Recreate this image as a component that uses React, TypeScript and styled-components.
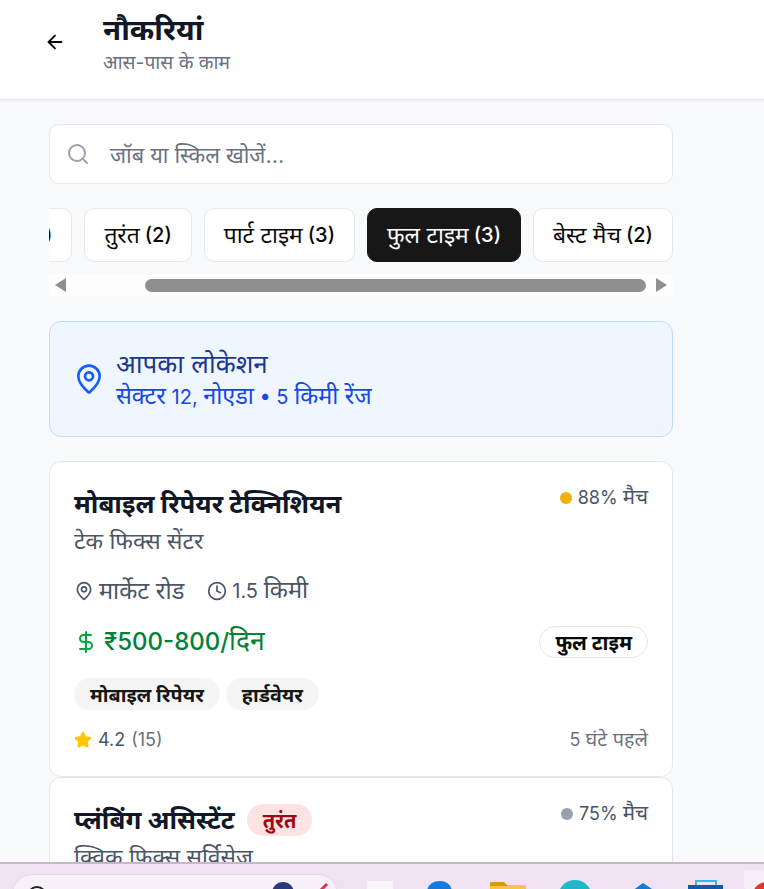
import styled, { createGlobalStyle } from "styled-components";
import { ArrowLeft, Clock, DollarSign, MapPin, Search, Star } from "lucide-react";

const GlobalStyle = createGlobalStyle`
  html, body {
    margin: 0;
    padding: 0;
    height: 100%;
    overflow: hidden;
  }
  body {
    font-family: Inter, "Noto Sans", "Noto Sans Devanagari", sans-serif;
    background: #f9fafb;
  }
  * {
    box-sizing: border-box;
  }
`;

// devanagari runs sit a bit larger and lighter than the latin digits next to them
const Hi = styled.span<{ $scale?: number }>`
  font-size: ${(p) => p.$scale ?? 1.14}em;
  font-weight: 400;
  line-height: 1;
`;

const Page = styled.div`
  height: 889px;
  display: flex;
  flex-direction: column;
  overflow: hidden;
`;

const Screen = styled.div`
  flex: 1;
  min-height: 0;
  overflow: hidden;
`;

const Header = styled.header`
  height: 100px;
  background: #fff;
  border-bottom: 1px solid #e5e7eb;
  box-shadow: 0 1px 2px rgba(0, 0, 0, 0.05);
  display: flex;
  align-items: flex-start;
  padding: 11px 0 0 43px;
`;

const BackBtn = styled.button`
  width: 24px;
  height: 24px;
  margin-top: 19px;
  padding: 0;
  border: none;
  background: none;
  color: #0a0a0a;
  display: flex;
  align-items: center;
  justify-content: center;
`;

const HeaderText = styled.div`
  margin-left: 36px;
  display: flex;
  flex-direction: column;
`;

const PageTitle = styled.h1`
  margin: 0;
  font-size: 29.5px;
  line-height: 36px;
  font-weight: 700;
  color: #101828;
`;

const PageSub = styled.p`
  margin: 1px 0 0;
  font-size: 19.2px;
  line-height: 28px;
  color: #6a7282;
`;

const Content = styled.main`
  width: 624px;
  margin-left: 49px;
  padding-top: 24px;
`;

const SearchBox = styled.div`
  height: 60px;
  background: #fff;
  border: 1px solid #e5e7eb;
  border-radius: 10px;
  display: flex;
  align-items: center;
  gap: 20px;
  padding-left: 16px;
  color: #99a1af;
`;

const Placeholder = styled.span`
  font-size: 21.7px;
  color: #6a7282;
`;

const Chips = styled.div`
  margin-top: 24px;
  display: flex;
  justify-content: flex-end;
  gap: 12px;
  overflow: hidden;
`;

const Chip = styled.div<{ $active?: boolean }>`
  flex: none;
  height: 54px;
  padding: 0 19px;
  border-radius: 10px;
  border: 1px solid ${(p) => (p.$active ? "#171717" : "#e5e7eb")};
  background: ${(p) => (p.$active ? "#171717" : "#fff")};
  color: ${(p) => (p.$active ? "#fff" : "#0a0a0a")};
  font-size: 20px;
  font-weight: 500;
  display: flex;
  align-items: center;
  gap: 5px;
`;

const ScrollTrack = styled.div`
  height: 22px;
  margin-top: 12px;
  background: #fdfdfd;
  display: flex;
  align-items: center;
  padding: 0 6px;
`;

const ArrowTip = styled.div<{ $right?: boolean }>`
  width: 0;
  height: 0;
  border-top: 7px solid transparent;
  border-bottom: 7px solid transparent;
  ${(p) =>
    p.$right
      ? "border-left: 11px solid #8f8f8f; margin-left: 10px;"
      : "border-right: 11px solid #8f8f8f; margin-right: 79px;"}
`;

const ScrollThumb = styled.div`
  flex: 1;
  height: 13px;
  border-radius: 7px;
  background: #8f8f8f;
`;

const LocationCard = styled.section`
  height: 116px;
  margin-top: 25px;
  background: #eff6ff;
  border: 1px solid #bedbff;
  border-radius: 12px;
  display: flex;
  align-items: center;
  gap: 11px;
  padding-left: 23px;
  color: #155dfc;
`;

const LocationText = styled.div`
  display: flex;
  flex-direction: column;
`;

const LocationTitle = styled.div`
  font-size: 26px;
  line-height: 36px;
  color: #1c398e;
`;

const LocationSub = styled.div`
  font-size: 20px;
  line-height: 30px;
  color: #1447e6;
`;

const JobList = styled.div`
  margin-top: 24px;
  display: flex;
  flex-direction: column;
`;

const JobCard = styled.article`
  flex: none;
  height: 316px;
  background: #fff;
  border: 1px solid #e5e7eb;
  border-radius: 12px;
  padding: 24px;
  display: flex;
  flex-direction: column;
`;

const TopRow = styled.div`
  display: flex;
  justify-content: space-between;
  align-items: flex-start;
`;

const TitleLine = styled.div`
  display: flex;
  align-items: center;
  gap: 12px;
`;

const JobTitle = styled.h3`
  margin: 0;
  font-size: 25.8px;
  line-height: 36px;
  font-weight: 700;
  color: #101828;
`;

const Urgent = styled.span`
  height: 32px;
  padding: 0 16px;
  border-radius: 16px;
  background: #ffe2e2;
  color: #9f0712;
  font-size: 20px;
  font-weight: 700;
  display: flex;
  align-items: center;
`;

const Match = styled.div`
  display: flex;
  align-items: center;
  gap: 6px;
  font-size: 18px;
  line-height: 24px;
  color: #4a5565;
`;

const MatchDot = styled.span<{ $color: string }>`
  width: 12px;
  height: 12px;
  border-radius: 50%;
  background: ${(p) => p.$color};
`;

const Company = styled.div`
  font-size: 22.8px;
  line-height: 37px;
  color: #4a5565;
`;

const MetaRow = styled.div`
  margin-top: 16px;
  display: flex;
  align-items: center;
  gap: 23px;
  font-size: 20px;
  line-height: 32px;
  color: #4a5565;
`;

const MetaItem = styled.span`
  display: flex;
  align-items: center;
  gap: 5px;
`;

const PayRow = styled.div`
  margin-top: 16px;
  display: flex;
  align-items: center;
  justify-content: space-between;
`;

const Pay = styled.div`
  display: flex;
  align-items: center;
  gap: 6px;
  font-size: 24px;
  line-height: 38px;
  font-weight: 500;
  color: #008236;
`;

const TypeBadge = styled.span`
  height: 32px;
  padding: 0 15px;
  border: 1px solid #e5e7eb;
  border-radius: 16px;
  font-size: 20.1px;
  font-weight: 700;
  color: #0a0a0a;
  display: flex;
  align-items: center;
`;

const Tags = styled.div`
  margin-top: 17px;
  display: flex;
  gap: 6px;
`;

const Tag = styled.span`
  height: 32px;
  padding: 0 16px;
  border-radius: 16px;
  background: #f5f5f5;
  font-size: 19.7px;
  font-weight: 700;
  color: #171717;
  display: flex;
  align-items: center;
`;

const FootRow = styled.div`
  margin-top: 16px;
  display: flex;
  align-items: center;
  justify-content: space-between;
  font-size: 18px;
  line-height: 28px;
  color: #6a7282;
`;

const Rating = styled.span`
  display: flex;
  align-items: center;
  gap: 6px;
  color: #4a5565;
`;

const Count = styled.span`
  color: #6a7282;
`;

const Taskbar = styled.footer`
  flex: none;
  height: 27px;
  background: #f0e1f3;
  border-top: 2px solid #c7b8c9;
  position: relative;
  overflow: hidden;
`;

const TaskSearch = styled.div`
  position: absolute;
  left: 12px;
  top: 10px;
  width: 326px;
  height: 40px;
  border-radius: 20px;
  background: #f8f0f9;
  border: 1px solid #e6d6e8;
`;

const TaskIcons = styled.svg`
  position: absolute;
  left: 0;
  top: 0;
`;

export default function App() {
  return (
    <Page>
      <GlobalStyle />
      <Screen>
        <Header>
          <BackBtn>
            <ArrowLeft size={22} strokeWidth={2} />
          </BackBtn>
          <HeaderText>
            <PageTitle>नौकरियां</PageTitle>
            <PageSub>आस-पास के काम</PageSub>
          </HeaderText>
        </Header>
        <Content>
          <SearchBox>
            <Search size={24} strokeWidth={2} />
            <Placeholder>जॉब या स्किल खोजें...</Placeholder>
          </SearchBox>
          <Chips>
            <Chip>
              <Hi>सभी</Hi> (8)
            </Chip>
            <Chip>
              <Hi>तुरंत</Hi> (2)
            </Chip>
            <Chip>
              <Hi>पार्ट टाइम</Hi> (3)
            </Chip>
            <Chip $active>
              <Hi>फुल टाइम</Hi> (3)
            </Chip>
            <Chip>
              <Hi>बेस्ट मैच</Hi> (2)
            </Chip>
          </Chips>
          <ScrollTrack>
            <ArrowTip />
            <ScrollThumb />
            <ArrowTip $right />
          </ScrollTrack>
          <LocationCard>
            <MapPin size={32} strokeWidth={2} />
            <LocationText>
              <LocationTitle>आपका लोकेशन</LocationTitle>
              <LocationSub>
                <Hi $scale={1.17}>सेक्टर</Hi> 12, <Hi $scale={1.17}>नोएडा</Hi> • 5{" "}
                <Hi $scale={1.17}>किमी रेंज</Hi>
              </LocationSub>
            </LocationText>
          </LocationCard>
          <JobList>
            <JobCard>
              <TopRow>
                <TitleLine>
                  <JobTitle>मोबाइल रिपेयर टेक्निशियन</JobTitle>
                </TitleLine>
                <Match>
                  <MatchDot $color="#f0b100" />
                  <span>
                    88% <Hi>मैच</Hi>
                  </span>
                </Match>
              </TopRow>
              <Company>टेक फिक्स सेंटर</Company>
              <MetaRow>
                <MetaItem>
                  <MapPin size={20} strokeWidth={2} />
                  <Hi $scale={1.18}>मार्केट रोड</Hi>
                </MetaItem>
                <MetaItem>
                  <Clock size={20} strokeWidth={2} />
                  <span>
                    1.5 <Hi $scale={1.18}>किमी</Hi>
                  </span>
                </MetaItem>
              </MetaRow>
              <PayRow>
                <Pay>
                  <DollarSign size={24} strokeWidth={2} color="#00a63e" />
                  <span>
                    ₹500-800/<Hi $scale={1.1}>दिन</Hi>
                  </span>
                </Pay>
                <TypeBadge>फुल टाइम</TypeBadge>
              </PayRow>
              <Tags>
                <Tag>मोबाइल रिपेयर</Tag>
                <Tag>हार्डवेयर</Tag>
              </Tags>
              <FootRow>
                <Rating>
                  <Star size={18} fill="#fdc700" color="#fdc700" />
                  4.2 <Count>(15)</Count>
                </Rating>
                <span>
                  5 <Hi $scale={1.1}>घंटे पहले</Hi>
                </span>
              </FootRow>
            </JobCard>
            <JobCard>
              <TopRow>
                <TitleLine>
                  <JobTitle>प्लंबिंग असिस्टेंट</JobTitle>
                  <Urgent>तुरंत</Urgent>
                </TitleLine>
                <Match>
                  <MatchDot $color="#99a1af" />
                  <span>
                    75% <Hi>मैच</Hi>
                  </span>
                </Match>
              </TopRow>
              <Company>क्विक फिक्स सर्विसेज</Company>
            </JobCard>
          </JobList>
        </Content>
      </Screen>
      <Taskbar>
        <TaskSearch />
        <TaskIcons width="764" height="25" viewBox="0 0 764 25">
          <circle cx="37" cy="32" r="9" fill="none" stroke="#222" strokeWidth="2" />
          <circle cx="283" cy="29" r="11" fill="#2a3a78" />
          <path d="M319 28 L327 20" stroke="#e0314b" strokeWidth="3" />
          <rect x="367" y="17" width="26" height="10" fill="#f7f7f7" />
          <path d="M427 27 Q429 17 440 17 Q450 17 452 27 Z" fill="#0f7be0" />
          <rect x="490" y="21" width="36" height="6" fill="#f8c73e" />
          <path d="M490 22 V19 Q490 18 492 18 H504 L508 22 Z" fill="#d99a00" />
          <circle cx="575" cy="33" r="17" fill="#22b8c9" />
          <path d="M632 27 L643 19 L655 27 Z" fill="#0b7fd6" />
          <path d="M696 21 V17 H716 V21" fill="none" stroke="#35b7f0" strokeWidth="2" />
          <rect x="688" y="21" width="35" height="6" fill="#0f5aa6" />
          <rect x="744" y="6" width="20" height="19" rx="3" fill="#f8eef9" />
          <circle cx="766" cy="31" r="13" fill="#e5352b" />
        </TaskIcons>
      </Taskbar>
    </Page>
  );
}
